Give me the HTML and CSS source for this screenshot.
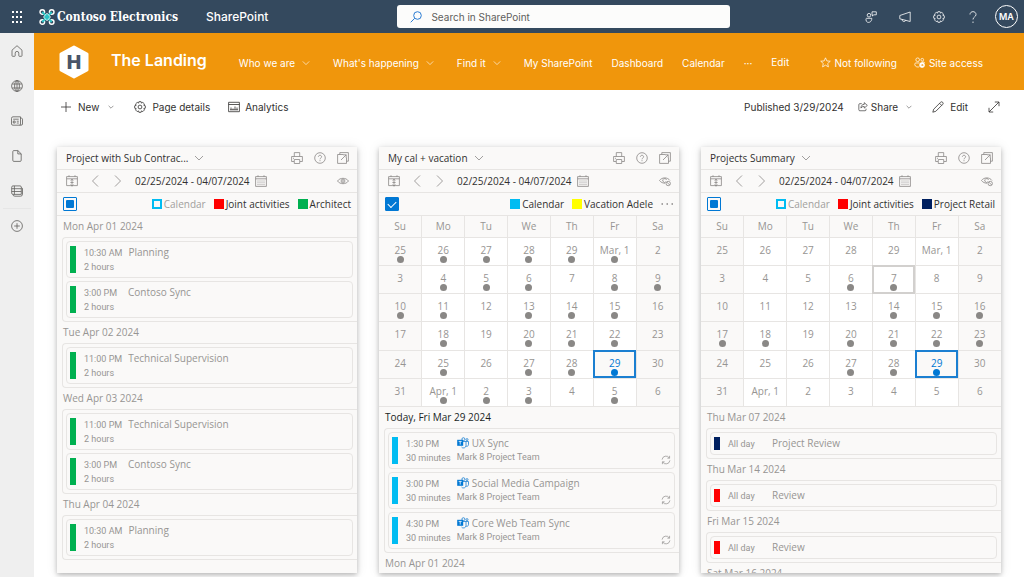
FILE: index.html
```html
<!DOCTYPE html>
<html lang="en">
<head>
<meta charset="utf-8">
<meta name="viewport" content="width=device-width, initial-scale=1">
<title>The Landing - SharePoint</title>
<link rel="stylesheet" href="styles.css">
</head>
<body>
<svg class="sprite" aria-hidden="true">
  <symbol id="chevron" viewBox="0 0 10 10"><path d="M1 3l4 4 4-4"/></symbol>
  <symbol id="prev" viewBox="0 0 12 12"><path d="M9 .5L3.500 6 9 11.500"/></symbol>
  <symbol id="next" viewBox="0 0 12 12"><path d="M3 .5L8.500 6 3 11.500"/></symbol>
  <symbol id="print" viewBox="0 0 12 12"><path d="M3.300 4.500V.6h5.400v3.900M3 9.500H.6v-5h10.800v5H9M3.300 7.500h5.400v4H3.300zM2 6.300h1"/></symbol>
  <symbol id="help" viewBox="0 0 12 12"><circle cx="6" cy="6" r="5.300"/><path d="M4.400 4.800c0-2 3.200-2 3.200 0 0 1.200-1.600 1.200-1.600 2.500M6 8.200v1"/></symbol>
  <symbol id="popout" viewBox="0 0 12 12"><path d="M2.800 2.500V.6h8.600v8.600H9.500M6.200 2.500H.6v8.900h8.900V5.800M4 8l5.200-5.200M6 2.800h3.200V6"/></symbol>
  <symbol id="today" viewBox="0 0 12 12"><path d="M.6 1.600h10.800v9H.6zM.6 3.800h10.800M3 .3v1.600M9 .3v1.600M6 4v7.500M4.600 5.500L6 4.300l1.400 1.200M4.600 9.600L6 11l1.400-1.400M4.400 7.500h3.200"/></symbol>
  <symbol id="cal" viewBox="0 0 12 12"><path d="M.6 1.600h10.800v9.800H.6zM.6 3.800h10.800M3 .3v1.600M9 .3v1.600"/><path stroke-dasharray="1 1" d="M2.500 6h7.500M2.500 7.800h7.500M2.500 9.600h7.500"/></symbol>
  <symbol id="eye" viewBox="0 0 12 12"><path d="M.5 6c2.500-3.600 8.500-3.600 11 0-2.500 3.600-8.500 3.600-11 0z"/><circle cx="6" cy="6" r="1.900"/><circle cx="6" cy="6" r=".5"/></symbol>
  <symbol id="eyeoff" viewBox="0 0 12 12"><path d="M.5 5.500C3 2 8.500 2 11 5.500M.5 5.500C2 7.500 4 8.200 6 8.200"/><path d="M7 6.800a1.900 1.900 0 1 1 .5-1.800"/><circle cx="9.200" cy="8.500" r="2.200"/><path d="M7.700 7l3 3"/></symbol>
  <symbol id="recur" viewBox="0 0 12 12"><path d="M1.300 5.500A4.700 4.700 0 0 1 10 3.600M10.700 6.500A4.700 4.700 0 0 1 2 8.400M10.300 1v2.800H7.600M1.700 11V8.200h2.700"/></symbol>
  <symbol id="teams" viewBox="0 0 12 12"><circle cx="6.400" cy="2.200" r="1.500"/><circle cx="10" cy="2.600" r="1"/><path d="M6 4.500h3v4a2.500 2.500 0 0 1-4.500 1.500M9 4.500h2.500v3.200a1.600 1.600 0 0 1-2.500 1.300"/><path class="solid" d="M.2 2.800h6v6h-6z"/><path class="mark" d="M1.700 4.400h3M3.200 4.400v3.200"/></symbol>
  <symbol id="gear" viewBox="0 0 12 12"><path d="M4.900.7h2.200l.4 1.400 1.300-.7 1.700 1.600-.7 1.300 1.500.5v2.400l-1.500.4.7 1.300-1.700 1.700-1.300-.7-.4 1.400H4.900l-.4-1.400-1.300.7-1.700-1.700.7-1.300-1.500-.4V4.800l1.500-.5-.7-1.300 1.700-1.600 1.300.7z"/><circle cx="6" cy="6" r="1.900"/></symbol>
</svg>

<header class="suite">
  <button class="waffle" aria-label="App launcher"><svg viewBox="0 0 12 12"><path d="M2 0v12M6 0v12M10 0v12" stroke-width="2" stroke-dasharray="2 3"/></svg></button>
  <a class="brand" href="#">
    <svg viewBox="0 0 16 18"><g stroke="#fff" stroke-width="1.400"><circle cx="3.300" cy="4" r="2.300"/><circle cx="12.700" cy="4" r="2.300"/><circle cx="3.300" cy="14" r="2.300"/><circle cx="12.700" cy="14" r="2.300"/></g><path d="M3.300 4l9.400 10M12.700 4L3.300 14" stroke="#2cc3c5" stroke-width="2"/><path d="M8 5.200L11.500 9 8 12.800 4.500 9z" fill="#2cc3c5"/></svg>
    <span>Contoso Electronics</span>
  </a>
  <a class="product" href="#">SharePoint</a>
  <label class="search"><svg viewBox="0 0 12 12"><circle cx="7.500" cy="4.500" r="3.800"/><path d="M4.700 7.300L.7 11.300"/></svg><input type="search" placeholder="Search in SharePoint" aria-label="Search in SharePoint"></label>
  <div class="suite-tools">
    <button aria-label="Community"><svg viewBox="0 0 12 12"><circle cx="4" cy="4.200" r="1.800"/><path d="M7 .8h4.300v3H8.800L7.500 5V3.800H7zM1.500 7.300h5.300c0 5.200-5.800 5.200-5.800 1.500 0-1 .2-1.500.5-1.500z"/></svg></button>
    <button aria-label="Announcements"><svg viewBox="0 0 12 12"><path d="M11.200 1v9.500L.8 7.800V4.500zM3 8.300c0 2.800 3.500 2.800 3.500 1"/></svg></button>
    <button aria-label="Settings"><svg><use href="#gear"/></svg></button>
    <button aria-label="Help"><svg viewBox="0 0 12 12"><path d="M3 3.500c0-3.800 6-3.800 6 0C9 6 6 5.800 6 8.500M6 10.500V12"/></svg></button>
    <button class="avatar" aria-label="Account">MA</button>
  </div>
</header>

<div class="shell">
  <nav class="rail" aria-label="App bar">
    <a href="#" aria-label="Home"><svg viewBox="0 0 12 12"><path d="M1 5.200L6 .7l5 4.500v5.500q0 .6-.6.600H8.300q-.5 0-.5-.6V8.200q0-1.800-1.800-1.800t-1.800 1.800v2.500q0 .6-.5.600H1.600q-.6 0-.6-.6z"/></svg></a>
    <a href="#" aria-label="Sites"><svg viewBox="0 0 12 12"><circle cx="6" cy="6" r="5.400"/><ellipse cx="6" cy="6" rx="2.400" ry="5.400"/><path d="M1.200 4h9.600M1.200 8h9.600M6 .6v10.800"/></svg></a>
    <a href="#" aria-label="News"><svg viewBox="0 0 12 12"><path d="M2 1.800h7.500V9q0 1.200-1 1.200H2Q.5 10.200.5 9V3.300Q.5 1.800 2 1.800zM9.500 3.200h1.200q.8.300.8 1V9q0 1.200-1.500 1.200H8.500M2.200 4.200h5.500M5.800 6.200h2M5.800 8h2"/><path d="M2.300 6h1.800v2H2.300z"/></svg></a>
    <a href="#" aria-label="Files"><svg viewBox="0 0 12 12"><path d="M2.700.6h4.200l3.300 3.200v6.500q0 1.100-1.100 1.100H2.900q-1.100 0-1.100-1.100V1.700Q1.800.6 2.700.6zM6.800.6v3.300h3.400"/></svg></a>
    <a href="#" aria-label="Lists"><svg viewBox="0 0 12 12"><path d="M2 .9h7q1.300 0 1.300 1.300v7.200H2Q.7 9.400.7 8.100V2.200Q.7.900 2 .9zM.7 3.700h9.600M.7 6.500h9.600M3.400.9v8.500M2 9.600q0 1.600 2 1.600h5.500q2 0 2-2V4q0-1.200-1.100-1.300"/></svg></a>
    <hr>
    <a href="#" aria-label="Create"><svg viewBox="0 0 12 12"><circle cx="6" cy="6" r="5.400"/><path d="M6 3.200v5.600M3.200 6h5.600"/></svg></a>
  </nav>

  <main class="page">
    <div class="hub">
      <svg class="site-logo" viewBox="0 0 30 34" role="img" aria-label="The Landing logo"><path d="M15 2l13 7v16l-13 7-13-7V9z" fill="#fff" stroke="#fff" stroke-width="3" stroke-linejoin="round"/><text x="15" y="24" text-anchor="middle">H</text></svg>
      <h1>The Landing</h1>
      <nav class="hub-nav" aria-label="Hub">
        <button>Who we are <svg class="tiny"><use href="#chevron"/></svg></button>
        <button>What's happening <svg class="tiny"><use href="#chevron"/></svg></button>
        <button>Find it <svg class="tiny"><use href="#chevron"/></svg></button>
        <a href="#">My SharePoint</a>
        <a href="#">Dashboard</a>
        <a href="#">Calendar</a>
        <button aria-label="More">···</button>
        <button class="edit-nav">Edit</button>
      </nav>
      <div class="site-actions">
        <button><svg viewBox="0 0 12 12"><path d="M6 .9l1.500 3.400 3.700.3-2.800 2.500.8 3.700L6 8.900l-3.200 1.900.8-3.700L.8 4.600l3.700-.3z"/></svg>Not following</button>
        <button><svg viewBox="0 0 12 12"><circle cx="4" cy="3" r="2"/><circle cx="9" cy="3" r="1.500"/><path d="M6 6.500H2Q.8 6.500.8 8c0 3 4.200 3.500 5 2.500M8.500 5.500h2q1 0 1 1"/><circle cx="8.800" cy="8.800" r="2.700" fill="#fff"/><path d="M7.500 8.800h2.600M9 7.800l1 1-1 1" stroke="#f0960c"/></svg>Site access</button>
      </div>
    </div>

    <div class="commands">
      <button><svg viewBox="0 0 12 12"><path d="M6 1v10M1 6h10"/></svg>New<svg class="tiny last"><use href="#chevron"/></svg></button>
      <button><svg><use href="#gear"/></svg>Page details</button>
      <button class="analytics"><svg viewBox="0 0 12 12"><path d="M.6 1.300h10.800v9.400H.6zM.6 3.500h10.800M3 8.800V6.500M5 8.800V7.500M7 8.800V5.500M9 8.800V6.500M2 8.800h8"/></svg>Analytics</button>
      <span class="published">Published 3/29/2024</span>
      <button class="share"><svg viewBox="0 0 12 12"><path d="M4.500 2H2.200Q1 2 1 3.200v6Q1 10.500 2.200 10.500h6.200q1.200 0 1.200-1.200V8M7.500.8l3.700 3.300-3.700 3.200V5.400C5.500 5.200 4.300 6 3.500 7.300 3.700 4.500 5 2.800 7.500 2.800z"/></svg>Share<svg class="tiny last"><use href="#chevron"/></svg></button>
      <button class="edit-page"><svg viewBox="0 0 12 12"><path d="M8.600 1.300q1.100-1.100 2.100 0t0 2.100L3.800 10.300.8 11.200l.9-3zM7.600 2.300l2.100 2.100"/></svg>Edit</button>
      <button class="expand" aria-label="Expand"><svg viewBox="0 0 12 12"><path d="M1 11L11 1M6.800 1H11v4.200M1 6.800V11h4.200"/></svg></button>
    </div>

    <div class="cards">
      <section class="card">
        <div class="card-row">
          <button class="view-name">Project with Sub Contrac... <svg><use href="#chevron"/></svg></button>
          <button class="push" aria-label="Print"><svg><use href="#print"/></svg></button>
          <button aria-label="Help"><svg><use href="#help"/></svg></button>
          <button aria-label="Open in new window"><svg><use href="#popout"/></svg></button>
        </div>
        <div class="card-row">
          <button aria-label="Today"><svg><use href="#today"/></svg></button>
          <button aria-label="Previous"><svg><use href="#prev"/></svg></button>
          <button aria-label="Next"><svg><use href="#next"/></svg></button>
          <button class="range">02/25/2024 - 04/07/2024 <svg><use href="#cal"/></svg></button>
          <button class="push" aria-label="Show details"><svg><use href="#eye"/></svg></button>
        </div>
        <div class="card-row legend">
          <input class="all some" type="checkbox" aria-label="Select all calendars">
          <label class="off push"><input class="sw cyan" type="checkbox">Calendar</label>
          <label><input class="sw red" type="checkbox" checked>Joint activities</label>
          <label><input class="sw green" type="checkbox" checked>Architect</label>
        </div>
        <div class="agenda">
          <h2>Mon Apr 01 2024</h2>
          <ul>
            <li><i class="bar green"></i><div class="when">10:30 AM<br>2 hours</div><div class="what">Planning</div></li>
            <li><i class="bar green"></i><div class="when">3:00 PM<br>2 hours</div><div class="what">Contoso Sync</div></li>
          </ul>
          <h2>Tue Apr 02 2024</h2>
          <ul>
            <li><i class="bar green"></i><div class="when">11:00 PM<br>2 hours</div><div class="what">Technical Supervision</div></li>
          </ul>
          <h2>Wed Apr 03 2024</h2>
          <ul>
            <li><i class="bar green"></i><div class="when">11:00 PM<br>2 hours</div><div class="what">Technical Supervision</div></li>
            <li><i class="bar green"></i><div class="when">3:00 PM<br>2 hours</div><div class="what">Contoso Sync</div></li>
          </ul>
          <h2>Thu Apr 04 2024</h2>
          <ul>
            <li><i class="bar green"></i><div class="when">10:30 AM<br>2 hours</div><div class="what">Planning</div></li>
          </ul>
        </div>
      </section>

      <section class="card">
        <div class="card-row">
          <button class="view-name">My cal + vacation <svg><use href="#chevron"/></svg></button>
          <button class="push" aria-label="Print"><svg><use href="#print"/></svg></button>
          <button aria-label="Help"><svg><use href="#help"/></svg></button>
          <button aria-label="Open in new window"><svg><use href="#popout"/></svg></button>
        </div>
        <div class="card-row">
          <button aria-label="Today"><svg><use href="#today"/></svg></button>
          <button aria-label="Previous"><svg><use href="#prev"/></svg></button>
          <button aria-label="Next"><svg><use href="#next"/></svg></button>
          <button class="range">02/25/2024 - 04/07/2024 <svg><use href="#cal"/></svg></button>
          <button class="push" aria-label="Hide details"><svg><use href="#eyeoff"/></svg></button>
        </div>
        <div class="card-row legend">
          <input class="all" type="checkbox" checked aria-label="Select all calendars">
          <label class="push"><input class="sw cyan" type="checkbox" checked>Calendar</label>
          <label><input class="sw yellow" type="checkbox" checked>Vacation Adele</label>
          <button class="more" aria-label="More calendars"><svg viewBox="0 0 12 12"><path d="M.5 6h11.500" stroke-dasharray="1.500 3.500" stroke-width="1.500"/></svg></button>
        </div>
        <table class="month">
          <thead><tr><th>Su</th><th>Mo</th><th>Tu</th><th>We</th><th>Th</th><th>Fr</th><th>Sa</th></tr></thead>
          <tbody>
            <tr><td class="dot">25</td><td class="dot">26</td><td class="dot">27</td><td class="dot">28</td><td class="dot">29</td><td class="dot">Mar, 1</td><td>2</td></tr>
            <tr><td>3</td><td class="dot">4</td><td class="dot">5</td><td class="dot">6</td><td>7</td><td class="dot">8</td><td class="dot">9</td></tr>
            <tr><td class="dot">10</td><td class="dot">11</td><td>12</td><td class="dot">13</td><td class="dot">14</td><td class="dot">15</td><td>16</td></tr>
            <tr><td>17</td><td class="dot">18</td><td>19</td><td class="dot">20</td><td class="dot">21</td><td class="dot">22</td><td>23</td></tr>
            <tr><td>24</td><td class="dot">25</td><td>26</td><td class="dot">27</td><td class="dot">28</td><td class="dot today">29</td><td>30</td></tr>
            <tr><td>31</td><td class="dot">Apr, 1</td><td class="dot">2</td><td class="dot">3</td><td>4</td><td class="dot">5</td><td>6</td></tr>
          </tbody>
        </table>
        <div class="agenda">
          <h2 class="now">Today, Fri Mar 29 2024</h2>
          <ul>
            <li><i class="bar cyan"></i><div class="when">1:30 PM<br>30 minutes</div><div class="what"><svg class="teams"><use href="#teams"/></svg>UX Sync<small>Mark 8 Project Team</small></div><svg class="recur"><use href="#recur"/></svg></li>
            <li><i class="bar cyan"></i><div class="when">3:00 PM<br>30 minutes</div><div class="what"><svg class="teams"><use href="#teams"/></svg>Social Media Campaign<small>Mark 8 Project Team</small></div><svg class="recur"><use href="#recur"/></svg></li>
            <li><i class="bar cyan"></i><div class="when">4:30 PM<br>30 minutes</div><div class="what"><svg class="teams"><use href="#teams"/></svg>Core Web Team Sync<small>Mark 8 Project Team</small></div><svg class="recur"><use href="#recur"/></svg></li>
          </ul>
          <h2>Mon Apr 01 2024</h2>
        </div>
      </section>

      <section class="card">
        <div class="card-row">
          <button class="view-name">Projects Summary <svg><use href="#chevron"/></svg></button>
          <button class="push" aria-label="Print"><svg><use href="#print"/></svg></button>
          <button aria-label="Help"><svg><use href="#help"/></svg></button>
          <button aria-label="Open in new window"><svg><use href="#popout"/></svg></button>
        </div>
        <div class="card-row">
          <button aria-label="Today"><svg><use href="#today"/></svg></button>
          <button aria-label="Previous"><svg><use href="#prev"/></svg></button>
          <button aria-label="Next"><svg><use href="#next"/></svg></button>
          <button class="range">02/25/2024 - 04/07/2024 <svg><use href="#cal"/></svg></button>
          <button class="push" aria-label="Hide details"><svg><use href="#eyeoff"/></svg></button>
        </div>
        <div class="card-row legend">
          <input class="all some" type="checkbox" aria-label="Select all calendars">
          <label class="off push"><input class="sw cyan" type="checkbox">Calendar</label>
          <label><input class="sw red" type="checkbox" checked>Joint activities</label>
          <label><input class="sw navy" type="checkbox" checked>Project Retail</label>
        </div>
        <table class="month">
          <thead><tr><th>Su</th><th>Mo</th><th>Tu</th><th>We</th><th>Th</th><th>Fr</th><th>Sa</th></tr></thead>
          <tbody>
            <tr><td>25</td><td>26</td><td>27</td><td>28</td><td>29</td><td>Mar, 1</td><td>2</td></tr>
            <tr><td>3</td><td>4</td><td>5</td><td class="dot">6</td><td class="dot picked">7</td><td>8</td><td>9</td></tr>
            <tr><td>10</td><td>11</td><td>12</td><td>13</td><td class="dot">14</td><td class="dot">15</td><td class="dot">16</td></tr>
            <tr><td class="dot">17</td><td class="dot">18</td><td>19</td><td class="dot">20</td><td class="dot">21</td><td class="dot">22</td><td class="dot">23</td></tr>
            <tr><td>24</td><td>25</td><td>26</td><td class="dot">27</td><td class="dot">28</td><td class="dot today">29</td><td>30</td></tr>
            <tr><td>31</td><td>Apr, 1</td><td>2</td><td>3</td><td>4</td><td>5</td><td>6</td></tr>
          </tbody>
        </table>
        <div class="agenda">
          <h2>Thu Mar 07 2024</h2>
          <ul>
            <li><i class="bar navy"></i><div class="when">All day</div><div class="what">Project Review</div></li>
          </ul>
          <h2>Thu Mar 14 2024</h2>
          <ul>
            <li><i class="bar red"></i><div class="when">All day</div><div class="what">Review</div></li>
          </ul>
          <h2>Fri Mar 15 2024</h2>
          <ul>
            <li><i class="bar red"></i><div class="when">All day</div><div class="what">Review</div></li>
          </ul>
          <h2>Sat Mar 16 2024</h2>
        </div>
      </section>
    </div>
  </main>
</div>
</body>
</html>
```
FILE: styles.css
```css
* { box-sizing: border-box; }

body {
  margin: 0;
  height: 100vh;
  display: flex;
  flex-direction: column;
  overflow: hidden;
  background: #fff;
  color: #323130;
  font: 10px/14px Inter, "Liberation Sans", sans-serif;
}

button, input {
  font: inherit;
  color: inherit;
  margin: 0;
  padding: 0;
  border: 0;
  background: none;
}

button { display: flex; align-items: center; white-space: nowrap; }
a { color: inherit; text-decoration: none; }

svg {
  width: 12px;
  height: 12px;
  flex: none;
  fill: none;
  stroke: currentColor;
  stroke-width: .8;
  overflow: visible;
}

.sprite { position: absolute; width: 0; height: 0; }

/* Suite bar */
.suite {
  height: 33px;
  flex: none;
  display: flex;
  align-items: center;
  padding: 0 6px 0 11px;
  background: #34495e;
  color: #fff;
}

.brand { display: flex; align-items: center; margin-left: 16px; width: 143px; white-space: nowrap; font: bold 12px/20px "DejaVu Serif", serif; }
.brand span { font-family: "DejaVu Serif Condensed", "DejaVu Serif", serif; }
.brand svg { width: 16px; height: 18px; margin-right: 2px; }
.product { margin-left: 24px; font-size: 12px; font-weight: 500; }

.search {
  flex: 0 1 333px;
  height: 23px;
  margin: 0 auto 0 129px;
  padding: 0 13px;
  display: flex;
  align-items: center;
  gap: 9px;
  background: #fcfcfb;
  border-radius: 3px;
  color: #2b7cd3;
}
.search svg { stroke-width: 1; }
.search input { flex: 1; min-width: 0; outline: 0; color: #323130; }
.search input::placeholder { color: #605e5c; opacity: 1; }

.suite-tools { display: flex; align-items: center; gap: 22px; }
.suite-tools .avatar { width: 23px; height: 23px; justify-content: center; border: 1px solid #fff; border-radius: 50%; font-size: 9px; font-weight: 600; margin-left: -6px; }

.shell { flex: 1; min-height: 0; display: flex; }

/* App bar */
.rail {
  width: 34px;
  flex: none;
  display: flex;
  flex-direction: column;
  align-items: center;
  gap: 23px;
  padding-top: 12px;
  background: #efefef;
  color: #605e5c;
}
.rail a { display: flex; }
.rail hr { width: 28px; margin: -12px 0; border: 0; border-top: 1px solid #e6e6e6; }

.page { flex: 1; min-width: 0; display: flex; flex-direction: column; }

/* Hub header */
.hub {
  height: 57px;
  flex: none;
  display: flex;
  align-items: center;
  padding: 0 41px 0 25px;
  background: #f0960c;
  color: #fff;
}
.site-logo { width: 30px; height: 34px; }
.site-logo text { font: bold 19px "DejaVu Sans", sans-serif; fill: #4a5568; stroke: none; }
.hub h1 { margin: 0 0 4px 22px; font-size: 16px; line-height: 24px; font-weight: 600; white-space: nowrap; }
.hub-nav { display: flex; align-items: center; gap: 19px; margin-left: 32px; white-space: nowrap; padding-top: 2px; }
.hub-nav button:has(svg) { gap: 7px; margin-right: 4px; }
.edit-nav { padding-bottom: 2px; }
.site-actions { display: flex; gap: 17px; margin-left: auto; padding-top: 2px; }
.site-actions button { gap: 4px; }
.site-actions svg { width: 11px; height: 11px; }
svg.tiny { width: 8px; height: 8px; }

/* Command bar */
.commands { flex: none; height: 33px; display: flex; align-items: center; padding: 0 24px 0 26px; gap: 20px; }
.commands button { gap: 6px; }
.commands .analytics { gap: 5px; margin-left: -2px; }
.commands .last { width: 6px; height: 6px; margin-left: 3px; }
.published { margin-left: auto; margin-right: -6px; white-space: nowrap; }
.commands .share { gap: 3px; }
.commands .share svg:first-child { width: 10px; height: 10px; }
.commands .share .last { margin-left: 5px; }

/* Calendar cards */
.cards {
  flex: 1;
  min-height: 0;
  display: grid;
  grid-template-columns: repeat(3, minmax(0, 1fr));
  gap: 22px;
  padding: 24px 23px 4px;
  font: 10px/14px "Open Sans", "Noto Sans", sans-serif;
}
.card {
  overflow: hidden;
  background: #faf9f8;
  box-shadow: 0 2px 5px rgba(0, 0, 0, .25), 0 0 12px rgba(0, 0, 0, .08);
}
.card-row {
  height: 23px;
  display: flex;
  align-items: center;
  gap: 11px;
  padding: 0 8px 0 9px;
  border-bottom: 1px solid #e7e5e3;
}
.card-row svg { color: #8a8886; }
.push { margin-left: auto; }
.view-name svg { width: 10px; height: 10px; margin-left: 6px; }
.range { gap: 5px; }

.legend { gap: 8px; padding: 0 6px; }
.legend label { display: flex; align-items: center; gap: 2px; white-space: nowrap; }
.legend .off { color: #a19f9d; }

.cyan { --tone: #00bcf2; }
.red { --tone: #f00; }
.green { --tone: #00b050; }
.yellow { --tone: #ff0; }
.navy { --tone: #002060; }

.sw { appearance: none; width: 10px; height: 10px; border: 2px solid var(--tone); }
.sw:checked { background: var(--tone); }

.all { appearance: none; width: 14px; height: 14px; border: 1px solid #0078d4; border-radius: 1px; display: grid; place-items: center; }
.some::before { content: ""; width: 8px; height: 8px; border-radius: 1px; background: #0078d4; }
.all:checked { background: #0078d4; }
.all:checked::before { content: ""; width: 7px; height: 4px; margin-bottom: 2px; border: solid #fff; border-width: 0 0 1px 1px; rotate: -45deg; }

.month { width: 100%; height: 191px; table-layout: fixed; border-collapse: collapse; color: #979593; }
.month th, .month td { border: 1px solid #e7e5e3; border-top: 0; padding: 0; text-align: center; font-weight: 400; }
.month th { height: 21px; }
.month td { vertical-align: top; padding-top: 6px; background: #fff; line-height: 13px; }
.month tr > :first-child { border-left: 0; }
.month tr > :last-child { border-right: 0; }
.month td:first-child, .month td:last-child { background: #faf9f8; }
.month td::after { content: ""; display: block; width: 7px; height: 7px; margin: -1px auto 0; border-radius: 50%; }
.month .dot::after { background: #8a8886; }
.month .today { background: #faf9f8; color: #0078d4; outline: 2px solid #1b7fd1; outline-offset: -2px; }
.month .today::after { background: #0078d4; }
.picked { outline: 2px solid #d2d0ce; outline-offset: -2px; }

/* Agenda list */
.agenda { color: #979593; }
.agenda h2 { margin: 0; padding-left: 6px; font-size: 10px; line-height: 21px; font-weight: 400; }
.agenda .now { color: #201f1e; }
.agenda ul { list-style: none; margin: 0 0 0 5px; padding: 3px 4px 3px 3px; border: solid #e7e5e3; border-width: 1px 0 1px 1px; border-radius: 4px 0 0 4px; display: grid; gap: 3px; }
.agenda li { display: flex; padding: 3px; border: 1px solid #e7e5e3; border-radius: 4px; }
.bar { width: 6px; flex: none; margin: 1px 0; background: var(--tone); }
.when { min-width: 44px; margin-left: 8px; padding: 1px 6px 0 0; font: 9px/14px Roboto, sans-serif; }
.what { flex: 1; min-width: 0; line-height: 14px; }
.what small { display: block; font: 9px/14px Roboto, sans-serif; }
.teams { width: 12px; height: 12px; margin-right: 3px; vertical-align: -2px; color: #1b7fd1; }
.solid { fill: #0078d4; stroke: none; }
.mark { stroke: #fff; }
.recur { width: 10px; height: 10px; align-self: flex-end; color: #8a8886; }
```
